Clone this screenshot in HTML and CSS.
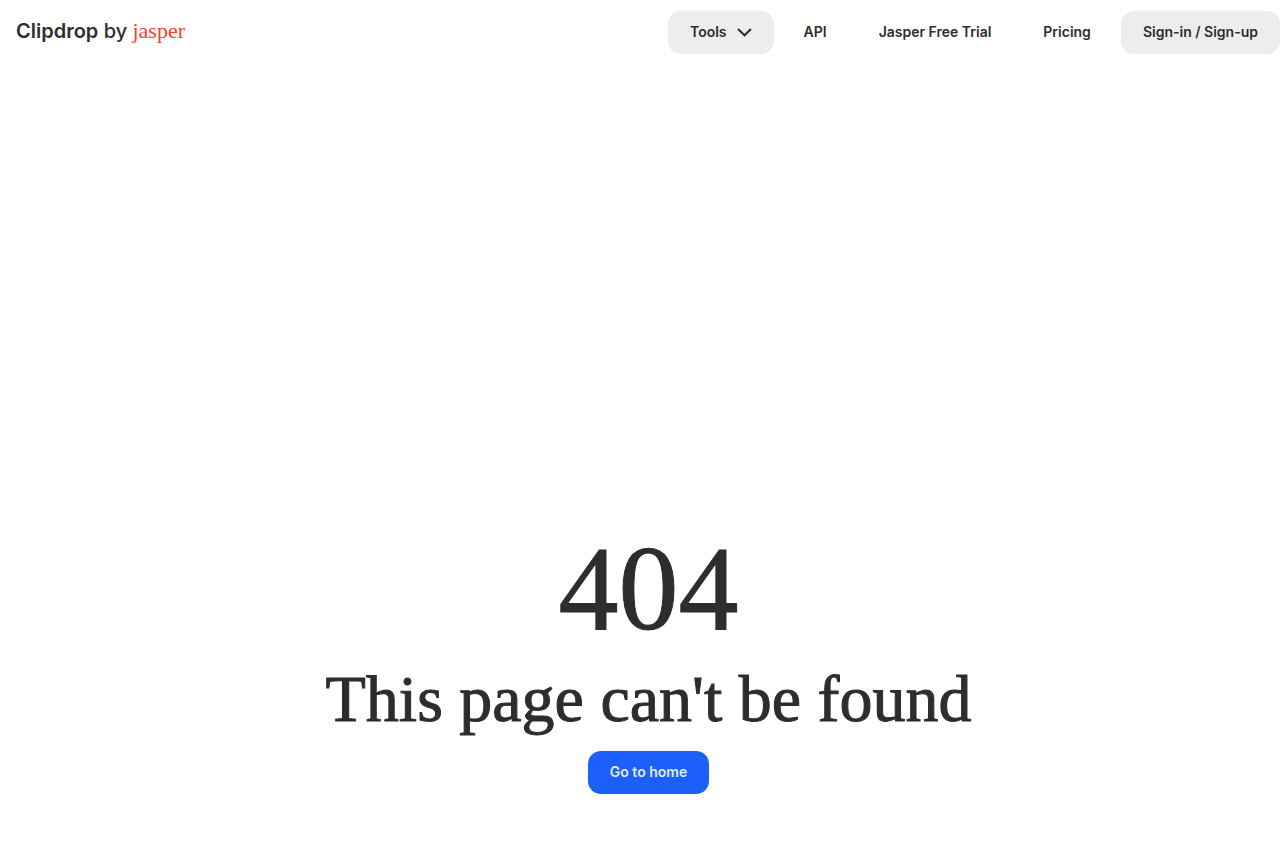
FILE: index.html
```html
<!DOCTYPE html>
<html lang="en">

<head>
    <meta charset="UTF-8">
    <meta name="viewport" content="width=device-width, initial-scale=1.0">
    <title>404 - Clipdrop</title>
    <link rel="stylesheet" href="styles.css">
</head>

<body>
    <header>
        <a class="logo" href="#"><b>Clipdrop</b> by <span>jasper</span></a>
        <nav>
            <button class="nav-item filled" type="button">
                Tools
                <svg width="15" height="9" viewBox="0 0 15 9" fill="none" stroke="currentColor" stroke-width="2">
                    <path d="M1 1l6.500 6.300L14 1" />
                </svg>
            </button>
            <a class="nav-item" href="#">API</a>
            <a class="nav-item" href="#">Jasper Free Trial</a>
            <a class="nav-item" href="#">Pricing</a>
            <a class="nav-item filled" href="#">Sign-in / Sign-up</a>
        </nav>
    </header>

    <main>
        <h1>404</h1>
        <h2>This page can't be found</h2>
        <a class="home" href="#">Go to home</a>
    </main>
</body>

</html>
```
FILE: styles.css
```css
* {
    box-sizing: border-box;
}

body {
    margin: 0;
    min-height: 100vh;
    display: flex;
    flex-direction: column;
    font-family: 'Inter', 'Liberation Sans', sans-serif;
    background: #fff;
    color: #2d2d2d;
}

a {
    color: inherit;
    text-decoration: none;
}

header {
    display: flex;
    align-items: center;
    justify-content: space-between;
    height: 64px;
    padding-left: 16px;
}

.logo {
    padding-bottom: 3px;
    font-size: 20px;
    font-weight: 500;
}

.logo b {
    font-weight: 600;
}

.logo span {
    font-family: 'Liberation Serif', serif;
    font-size: 22px;
    font-weight: 400;
    color: #fa4028;
}

nav {
    display: flex;
    gap: 8px;
}

.nav-item,
.home {
    display: flex;
    align-items: center;
    height: 43px;
    padding: 0 22px 2px;
    border: none;
    border-radius: 13px;
    background: none;
    color: inherit;
    font-family: inherit;
    font-size: 14px;
    font-weight: 600;
}

.nav-item svg {
    margin: 2px 0 0 10px;
}

.filled {
    background: #ededed;
}

main {
    flex: 1;
    display: flex;
    flex-direction: column;
    align-items: center;
    justify-content: flex-end;
    padding: 0 0 59px 17px;
}

h1,
h2 {
    margin: 0;
    font-family: 'Liberation Serif', serif;
    font-weight: 400;
    -webkit-text-stroke: 1px #2d2d2d;
}

h1 {
    font-size: 120px;
    line-height: 120px;
}

h2 {
    margin-bottom: 2px;
    font-size: 66px;
    line-height: 100px;
}

.home {
    background: #1c5ffa;
    color: #e4ecff;
}
```
